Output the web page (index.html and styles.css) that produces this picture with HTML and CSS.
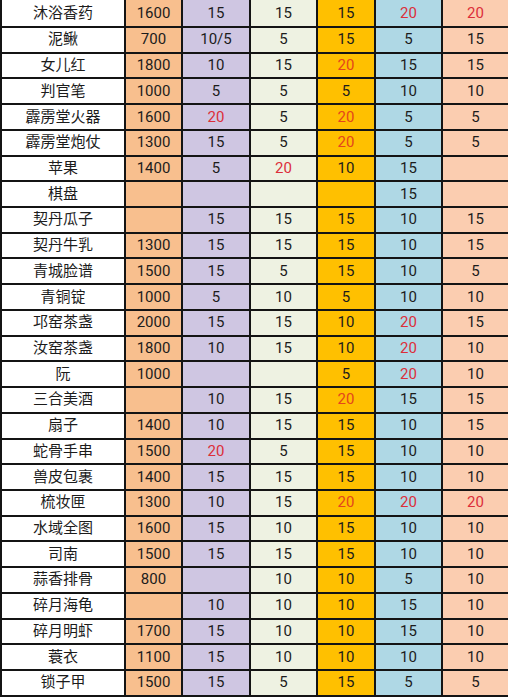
FILE: index.html
```html
<!DOCTYPE html>
<html lang="zh">
<head>
<meta charset="utf-8">
<link rel="stylesheet" href="styles.css">
<title>表</title>
</head>
<body>
<div class="sheet">
<div class="c n">沐浴香药</div><div class="c p">1600</div><div class="c a">15</div><div class="c b">15</div><div class="c g">15</div><div class="c l hi">20</div><div class="c e hi">20</div>
<div class="c n">泥鳅</div><div class="c p">700</div><div class="c a">10/5</div><div class="c b">5</div><div class="c g">15</div><div class="c l">5</div><div class="c e">15</div>
<div class="c n">女儿红</div><div class="c p">1800</div><div class="c a">10</div><div class="c b">15</div><div class="c g hi">20</div><div class="c l">15</div><div class="c e">15</div>
<div class="c n">判官笔</div><div class="c p">1000</div><div class="c a">5</div><div class="c b">5</div><div class="c g">5</div><div class="c l">10</div><div class="c e">10</div>
<div class="c n">霹雳堂火器</div><div class="c p">1600</div><div class="c a hi">20</div><div class="c b">5</div><div class="c g hi">20</div><div class="c l">5</div><div class="c e">5</div>
<div class="c n">霹雳堂炮仗</div><div class="c p">1300</div><div class="c a">15</div><div class="c b">5</div><div class="c g hi">20</div><div class="c l">5</div><div class="c e">5</div>
<div class="c n">苹果</div><div class="c p">1400</div><div class="c a">5</div><div class="c b hi">20</div><div class="c g">10</div><div class="c l">15</div><div class="c e"></div>
<div class="c n">棋盘</div><div class="c p"></div><div class="c a"></div><div class="c b"></div><div class="c g"></div><div class="c l">15</div><div class="c e"></div>
<div class="c n">契丹瓜子</div><div class="c p"></div><div class="c a">15</div><div class="c b">15</div><div class="c g">15</div><div class="c l">10</div><div class="c e">15</div>
<div class="c n">契丹牛乳</div><div class="c p">1300</div><div class="c a">15</div><div class="c b">15</div><div class="c g">15</div><div class="c l">10</div><div class="c e">15</div>
<div class="c n">青城脸谱</div><div class="c p">1500</div><div class="c a">15</div><div class="c b">5</div><div class="c g">15</div><div class="c l">10</div><div class="c e">5</div>
<div class="c n">青铜锭</div><div class="c p">1000</div><div class="c a">5</div><div class="c b">10</div><div class="c g">5</div><div class="c l">10</div><div class="c e">10</div>
<div class="c n">邛窑茶盏</div><div class="c p">2000</div><div class="c a">15</div><div class="c b">15</div><div class="c g">10</div><div class="c l hi">20</div><div class="c e">15</div>
<div class="c n">汝窑茶盏</div><div class="c p">1800</div><div class="c a">10</div><div class="c b">15</div><div class="c g">10</div><div class="c l hi">20</div><div class="c e">10</div>
<div class="c n">阮</div><div class="c p">1000</div><div class="c a"></div><div class="c b"></div><div class="c g">5</div><div class="c l hi">20</div><div class="c e">10</div>
<div class="c n">三合美酒</div><div class="c p"></div><div class="c a">10</div><div class="c b">15</div><div class="c g hi">20</div><div class="c l">15</div><div class="c e">15</div>
<div class="c n">扇子</div><div class="c p">1400</div><div class="c a">10</div><div class="c b">15</div><div class="c g">15</div><div class="c l">10</div><div class="c e">15</div>
<div class="c n">蛇骨手串</div><div class="c p">1500</div><div class="c a hi">20</div><div class="c b">5</div><div class="c g">15</div><div class="c l">10</div><div class="c e">10</div>
<div class="c n">兽皮包裹</div><div class="c p">1400</div><div class="c a">15</div><div class="c b">15</div><div class="c g">15</div><div class="c l">10</div><div class="c e">10</div>
<div class="c n">梳妆匣</div><div class="c p">1300</div><div class="c a">10</div><div class="c b">15</div><div class="c g hi">20</div><div class="c l hi">20</div><div class="c e hi">20</div>
<div class="c n">水域全图</div><div class="c p">1600</div><div class="c a">15</div><div class="c b">10</div><div class="c g">15</div><div class="c l">10</div><div class="c e">10</div>
<div class="c n">司南</div><div class="c p">1500</div><div class="c a">15</div><div class="c b">15</div><div class="c g">15</div><div class="c l">10</div><div class="c e">10</div>
<div class="c n">蒜香排骨</div><div class="c p">800</div><div class="c a"></div><div class="c b">10</div><div class="c g">10</div><div class="c l">5</div><div class="c e">10</div>
<div class="c n">碎月海龟</div><div class="c p"></div><div class="c a">10</div><div class="c b">10</div><div class="c g">10</div><div class="c l">15</div><div class="c e">10</div>
<div class="c n">碎月明虾</div><div class="c p">1700</div><div class="c a">15</div><div class="c b">10</div><div class="c g">10</div><div class="c l">15</div><div class="c e">10</div>
<div class="c n">蓑衣</div><div class="c p">1100</div><div class="c a">15</div><div class="c b">10</div><div class="c g">10</div><div class="c l">10</div><div class="c e">10</div>
<div class="c n">锁子甲</div><div class="c p">1500</div><div class="c a">15</div><div class="c b">5</div><div class="c g">15</div><div class="c l">5</div><div class="c e">5</div>
</div>
</body>
</html>
```

FILE: styles.css
```css
html, body {
  margin: 0;
  padding: 0;
  background: #ffffff;
  overflow: hidden;
}

.sheet {
  display: grid;
  grid-template-columns: 122px 55px 66px 65px 56px 65px 65px;
  grid-template-rows: 26px repeat(26, 23.73px);
  gap: 2px;
  padding: 0 0 2px 2px;
  width: 506px;
  background: #141414;
  font-family: Roboto, "Noto Sans CJK SC", sans-serif;
  font-size: 15px;
  color: #1c1c1c;
}

.c {
  display: flex;
  align-items: center;
  justify-content: center;
  line-height: 1;
  white-space: nowrap;
}

.n { background: #ffffff; }
.p { background: #f8bf8e; }
.a { background: #cfc6e2; }
.b { background: #eef2e2; }
.g { background: #ffc000; }
.l { background: #afd8e5; }
.e { background: #fbcdb0; }

.hi { color: #dc2f3a; }
.g.hi { color: #e4461c; }
```
